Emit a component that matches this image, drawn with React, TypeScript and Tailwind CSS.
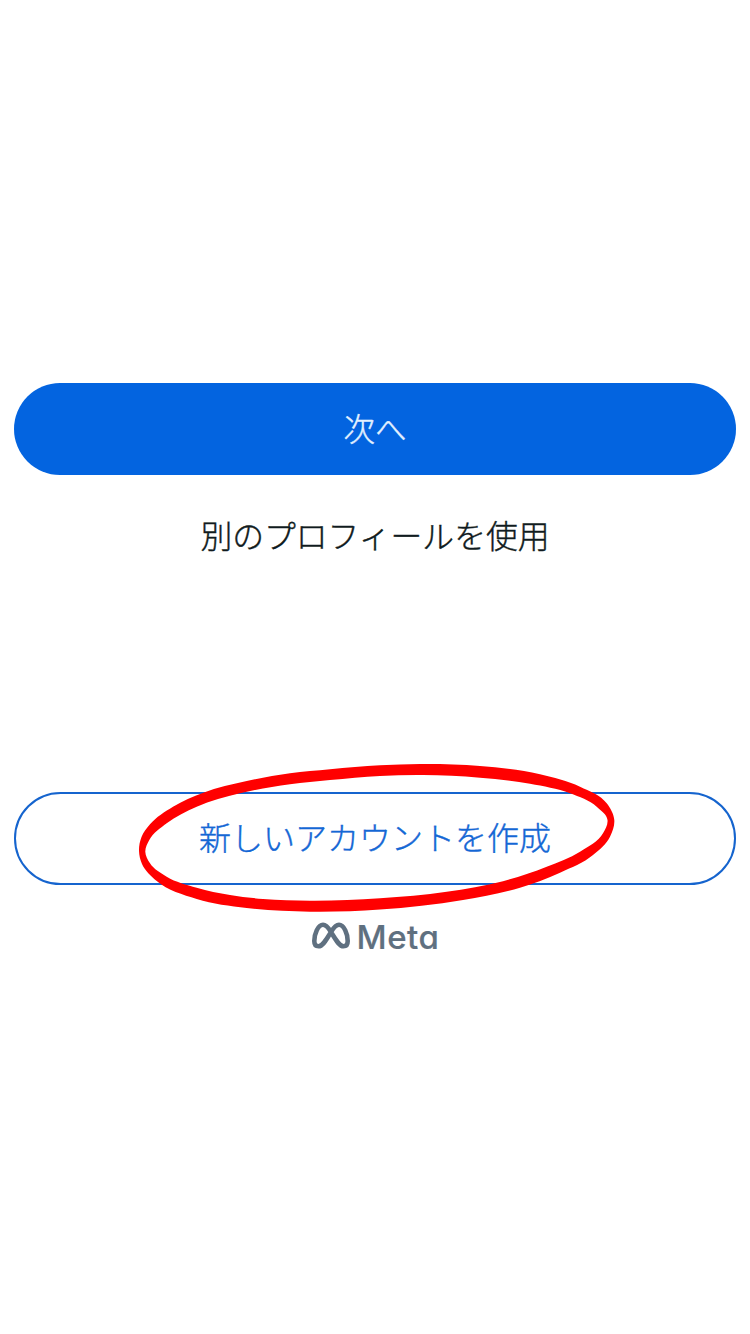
type Point = [number, number];

const outer: Point[] = [
  [139, 851], [141.5, 837], [150, 824.3], [173, 806.7], [203.3, 792.7], [246.7, 781], [290, 773.3], [330, 769.3],
  [380, 765.3], [420, 764], [480, 766], [540, 774.3], [580, 786.7], [606.7, 803.3], [614.3, 820],
  [610, 836.7], [593, 855], [560, 872.7], [520, 887.7], [463, 900], [380, 909.5], [310, 911.7],
  [246.7, 908], [196.7, 899], [156.7, 881], [142, 864],
];

const inner: Point[] = [
  [145.3, 851.7], [149.3, 840], [166.7, 823.3], [196.7, 806.7], [240, 793.3], [290, 784.3], [330, 780],
  [380, 775.9], [423, 775], [480, 777.7], [530, 783.7], [570, 793.3], [596.7, 806.7], [607.5, 820],
  [603, 833.3], [580, 851.7], [546.7, 866.7], [503, 881.2], [446.7, 891.7], [380, 898.2],
  [310, 900.7], [263, 899], [230, 895], [196.7, 887.7], [166.7, 876.7], [150, 863.3],
];

// Closed curve through the points; handle lengths follow the length of each segment.
function smooth(points: Point[]) {
  const n = points.length;
  const tangents = points.map((_, i) => {
    const a = points[(i + n - 1) % n];
    const b = points[i];
    const c = points[(i + 1) % n];
    const before = Math.hypot(b[0] - a[0], b[1] - a[1]);
    const after = Math.hypot(c[0] - b[0], c[1] - b[1]);
    const x = ((b[0] - a[0]) / before) * after + ((c[0] - b[0]) / after) * before;
    const y = ((b[1] - a[1]) / before) * after + ((c[1] - b[1]) / after) * before;
    const length = Math.hypot(x, y);
    return [x / length, y / length];
  });
  let d = `M${points[0][0]} ${points[0][1]}`;
  for (let i = 0; i < n; i++) {
    const j = (i + 1) % n;
    const b = points[i];
    const c = points[j];
    const h = Math.hypot(c[0] - b[0], c[1] - b[1]) / 3;
    d += `C${b[0] + tangents[i][0] * h} ${b[1] + tangents[i][1] * h} ${c[0] - tangents[j][0] * h} ${c[1] - tangents[j][1] * h} ${c[0]} ${c[1]}`;
  }
  return d + "Z";
}

export default function App() {
  return (
    <main className="flex h-[1334px] w-[750px] flex-col bg-white px-3.5 pt-[383px] font-['Noto_Sans_CJK_JP',sans-serif] text-[31.8px] font-light [-webkit-text-stroke:0.4px_currentColor]">
      <button className="flex h-[92px] w-[722px] shrink-0 items-center justify-center rounded-full bg-[#0364e0] pb-[3px] text-[31.5px] leading-none text-[#e3f1ff]">
        次へ
      </button>
      <button className="mt-[37px] flex h-[46px] shrink-0 items-center justify-center leading-none text-[#101b20]">
        別のプロフィールを使用
      </button>
      <div className="relative mt-[234px] h-[93px] w-[722px] shrink-0">
        <button className="flex h-full w-full items-center justify-center rounded-full border-2 border-[#1564ce] pb-1.5 text-[32px] leading-none text-[#1467d5]">
          新しいアカウントを作成
        </button>
        <svg
          className="pointer-events-none absolute -top-8 left-[121px] h-[156px] w-[484px]"
          viewBox="135 760 484 156"
          aria-hidden="true"
        >
          <path d={smooth(outer) + smooth(inner)} fill="#ff0000" fillRule="evenodd" />
        </svg>
      </div>
      <footer className="mt-[30px] flex h-10 shrink-0 items-center justify-center gap-1.5 text-[#5f7080]">
        <svg className="h-[29px] w-10" viewBox="311 921 40 29" fill="none" stroke="currentColor" strokeWidth="4.6" aria-hidden="true">
          <path d="M331 932C328 927 325.8 924.8 323 924.8C318 924.8 314.3 934 314.3 941C314.3 944.5 315.8 946.3 318.5 946.3C322.5 946.3 325.5 941 331 932C334 927 336.2 924.8 339 924.8C344 924.8 347.7 934 347.7 941C347.7 944.5 346.2 946.3 343.5 946.3C339.5 946.3 336.5 941 331 932Z" />
        </svg>
        <span className="translate-y-0.5 font-['Inter',sans-serif] text-[33px] leading-none font-medium tracking-[0.5px] [-webkit-text-stroke:0.2px_currentColor] [font-feature-settings:'cv11']">
          Meta
        </span>
      </footer>
    </main>
  );
}
